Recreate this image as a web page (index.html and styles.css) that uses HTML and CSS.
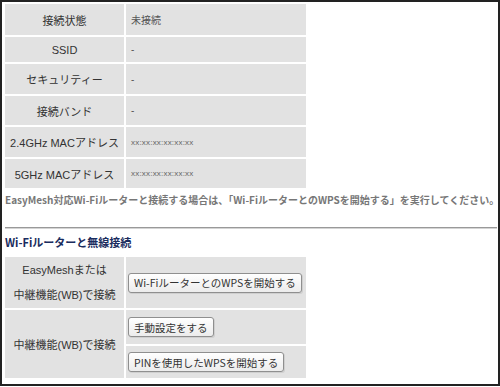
FILE: index.html
```html
<!DOCTYPE html>
<html lang="ja">
<head>
  <meta charset="UTF-8" />
  <meta name="viewport" content="width=device-width, initial-scale=1.0"/>
  <title>Wi-Fi接続</title>
  <link rel="stylesheet" href="styles.css">
</head>
<body>
  <div class="frame">
    <table class="info">
      <colgroup><col class="c1"><col class="c2"></colgroup>
      <tr class="r1"><th>接続状態</th><td>未接続</td></tr>
      <tr class="r2"><th>SSID</th><td>-</td></tr>
      <tr class="r3"><th>セキュリティー</th><td>-</td></tr>
      <tr class="r4"><th>接続バンド</th><td>-</td></tr>
      <tr class="r5"><th>2.4GHz MACアドレス</th><td class="mac">xx:xx:xx:xx:xx:xx</td></tr>
      <tr class="r6"><th>5GHz MACアドレス</th><td class="mac">xx:xx:xx:xx:xx:xx</td></tr>
    </table>

    <p class="note">EasyMesh対応Wi-Fiルーターと接続する場合は、「Wi-FiルーターとのWPSを開始する」を実行してください。</p>

    <hr class="rule">

    <h3 class="title">Wi-Fiルーターと無線接続</h3>

    <table class="info connect">
      <colgroup><col class="c1"><col class="c2"></colgroup>
      <tr class="b1">
        <th class="two">EasyMeshまたは<br>中継機能(WB)で接続</th>
        <td><button>Wi-FiルーターとのWPSを開始する</button></td>
      </tr>
      <tr class="b2">
        <th rowspan="2">中継機能(WB)で接続</th>
        <td><button>手動設定をする</button></td>
      </tr>
      <tr class="b3">
        <td><button>PINを使用したWPSを開始する</button></td>
      </tr>
    </table>
  </div>
</body>
</html>
```

FILE: styles.css
```css
body {
  margin: 0;
  background: #fff;
  font-family: "Liberation Sans", "Noto Sans CJK JP", sans-serif;
}

.frame {
  width: 500px;
  height: 386px;
  box-sizing: border-box;
  border: 2px solid #222;
  padding: 0 1px;
  overflow: hidden;
}

.info {
  border-collapse: separate;
  border-spacing: 2px;
  table-layout: fixed;
  width: 305px;
}

.info col.c1 { width: 119px; }
.info col.c2 { width: 180px; }

.info th,
.info td {
  background: #e2e2e2;
  padding: 0;
}

.info th {
  font-weight: normal;
  font-size: 11px;
  color: #333;
  text-align: center;
}

.info td {
  font-size: 10px;
  color: #555;
  padding-left: 5px;
  text-align: left;
}

.info td.mac {
  font-size: 8px;
  letter-spacing: 0.2px;
  color: #666;
}

.r1 th, .r1 td { height: 31px; }
.r2 th, .r2 td { height: 25px; }
.r3 th, .r3 td { height: 30px; }
.r4 th, .r4 td { height: 29px; }
.r5 th, .r5 td { height: 30px; }
.r6 th, .r6 td { height: 29px; }

.note {
  margin: 2px 0 0 2px;
  line-height: 16px;
  font-family: "Noto Sans CJK JP", sans-serif;
  font-size: 10px;
  font-weight: bold;
  color: #777;
  white-space: nowrap;
}

.rule {
  margin: 19px 0 0 2px;
  border: 0;
  border-top: 1px solid #999;
  border-bottom: 1px solid #d4d4d4;
}

.title {
  margin: 5px 0 0 2px;
  line-height: 16px;
  font-family: "Noto Sans CJK JP", sans-serif;
  font-size: 11px;
  font-weight: bold;
  color: #1a2c5e;
}

.connect {
  margin-top: 5px;
}

.connect td {
  padding-left: 2px;
}

.connect th.two {
  line-height: 25px;
}

.connect .b1 th, .connect .b1 td { height: 51px; }
.connect .b2 td { height: 34px; }
.connect .b3 td { height: 32px; }

.connect button {
  display: block;
  height: 20px;
  padding: 0 5px;
  font-family: "Noto Sans CJK JP", sans-serif;
  font-size: 10.5px;
  color: #333;
  background: linear-gradient(#ffffff, #ececec);
  border: 1px solid #8f8f8f;
  border-radius: 3px;
  box-shadow: 1px 1px 0 #cfcfcf;
  cursor: pointer;
}
```
